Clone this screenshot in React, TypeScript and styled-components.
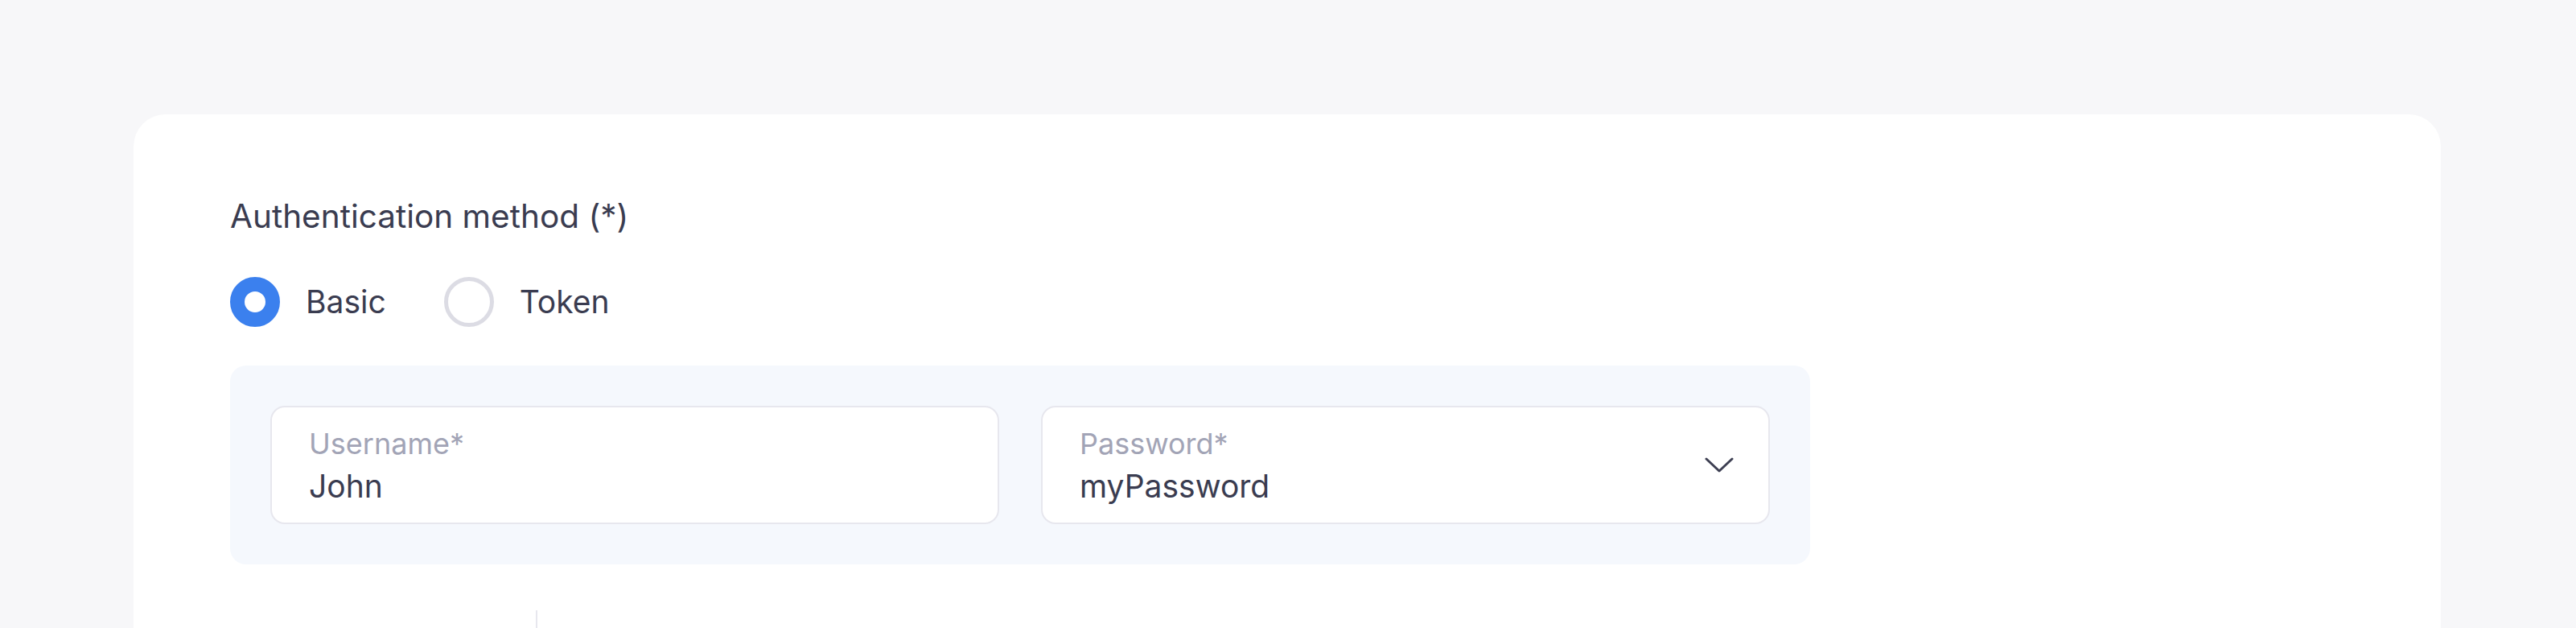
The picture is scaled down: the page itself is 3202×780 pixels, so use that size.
import { createGlobalStyle, styled } from 'styled-components';

const GlobalStyle = createGlobalStyle`
  html, body {
    margin: 0;
    padding: 0;
    background: #f7f7f9;
  }
  * {
    box-sizing: border-box;
  }
`;

type Field = {
  label: string;
  value: string;
  select?: boolean;
};

const fields: Field[] = [
  { label: 'Username*', value: 'John' },
  { label: 'Password*', value: 'myPassword', select: true },
];

const methods = ['Basic', 'Token'];

const ChevronDown = () => (
  <svg width="36" height="20" viewBox="0 0 36 20" fill="none">
    <path
      d="M2 2L18 17L34 2"
      stroke="#3d3f52"
      strokeWidth="3"
      strokeLinecap="round"
      strokeLinejoin="round"
    />
  </svg>
);

const App = () => {
  const selected = 'Basic';

  return (
    <Page>
      <GlobalStyle />
      <Card>
        <SectionTitle>Authentication method (*)</SectionTitle>
        <RadioGroup>
          {methods.map(m => (
            <RadioOption key={m}>
              <RadioCircle $checked={m === selected} />
              <RadioText>{m}</RadioText>
            </RadioOption>
          ))}
        </RadioGroup>

        <FieldPanel>
          {fields.map(f => (
            <InputBox key={f.label}>
              <InputTexts>
                <InputLabel>{f.label}</InputLabel>
                <InputValue>{f.value}</InputValue>
              </InputTexts>
              {f.select && (
                <IconSlot>
                  <ChevronDown />
                </IconSlot>
              )}
            </InputBox>
          ))}
        </FieldPanel>

        <NextSection>
          <NextColumn />
        </NextSection>
      </Card>
    </Page>
  );
};
export default App;

const Page = styled.div`
  width: 3202px;
  height: 780px;
  overflow: hidden;
  padding: 142px 168px 0 166px;
  font-family: Inter, 'Noto Sans', sans-serif;
`;

const Card = styled.div`
  background: #ffffff;
  border-radius: 40px 40px 0 0;
  padding: 103px 120px 0 120px;
  min-height: 700px;
`;

const SectionTitle = styled.div`
  font-size: 40.5px;
  line-height: 48px;
  color: #3a3c50;
`;

const RadioGroup = styled.div`
  display: flex;
  align-items: center;
  gap: 72px;
  margin-top: 51px;
`;

const RadioOption = styled.label`
  display: flex;
  align-items: center;
  gap: 32px;
`;

const RadioCircle = styled.span<{ $checked: boolean }>`
  width: 62px;
  height: 62px;
  border-radius: 50%;
  background: #ffffff;
  border: ${p => (p.$checked ? '18px solid #3b80ee' : '5px solid #dcdce4')};
`;

const RadioText = styled.span`
  font-size: 39px;
  line-height: 48px;
  color: #3a3c50;
`;

const FieldPanel = styled.div`
  width: 1964px;
  margin-top: 48px;
  padding: 50px;
  background: #f5f8fd;
  border-radius: 20px;
  display: grid;
  grid-template-columns: 1fr 1fr;
  gap: 52px;
`;

const InputBox = styled.div`
  height: 147px;
  background: #ffffff;
  border: 2px solid #e7e7ee;
  border-radius: 18px;
  padding: 0 43px 0 46px;
  display: flex;
  align-items: center;
  justify-content: space-between;
`;

const InputTexts = styled.div`
  display: flex;
  flex-direction: column;
  gap: 10px;
`;

const InputLabel = styled.div`
  font-size: 36px;
  line-height: 42px;
  color: #a2a4b6;
`;

const InputValue = styled.div`
  font-size: 39px;
  line-height: 44px;
  color: #3a3c50;
`;

const IconSlot = styled.span`
  display: flex;
  align-items: center;
`;

const NextSection = styled.div`
  display: flex;
  margin-top: 57px;
  height: 40px;
`;

const NextColumn = styled.div`
  width: 382px;
  border-right: 2px solid #e7e7ee;
`;
